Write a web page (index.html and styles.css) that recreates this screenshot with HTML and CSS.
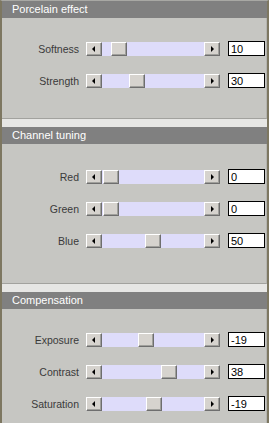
FILE: index.html
```html
<!DOCTYPE html>
<html lang="en">
<head>
<meta charset="UTF-8">
<title>Porcelain</title>
<link rel="stylesheet" href="styles.css">
</head>
<body>
<div class="panel">

  <section class="group">
    <h3 class="group-title">Porcelain effect</h3>
    <div class="group-body">
      <div class="row">
        <label>Softness</label>
        <div class="slider">
          <span class="btn btn-left"></span>
          <span class="track"><span class="thumb" style="left: 9px"></span></span>
          <span class="btn btn-right"></span>
        </div>
        <input type="text" value="10">
      </div>
      <div class="row">
        <label>Strength</label>
        <div class="slider">
          <span class="btn btn-left"></span>
          <span class="track"><span class="thumb" style="left: 27px"></span></span>
          <span class="btn btn-right"></span>
        </div>
        <input type="text" value="30">
      </div>
    </div>
  </section>

  <section class="group">
    <h3 class="group-title">Channel tuning</h3>
    <div class="group-body">
      <div class="row">
        <label>Red</label>
        <div class="slider">
          <span class="btn btn-left"></span>
          <span class="track"><span class="thumb" style="left: 1px"></span></span>
          <span class="btn btn-right"></span>
        </div>
        <input type="text" value="0">
      </div>
      <div class="row">
        <label>Green</label>
        <div class="slider">
          <span class="btn btn-left"></span>
          <span class="track"><span class="thumb" style="left: 1px"></span></span>
          <span class="btn btn-right"></span>
        </div>
        <input type="text" value="0">
      </div>
      <div class="row">
        <label>Blue</label>
        <div class="slider">
          <span class="btn btn-left"></span>
          <span class="track"><span class="thumb" style="left: 43px"></span></span>
          <span class="btn btn-right"></span>
        </div>
        <input type="text" value="50">
      </div>
    </div>
  </section>

  <section class="group">
    <h3 class="group-title">Compensation</h3>
    <div class="group-body">
      <div class="row">
        <label>Exposure</label>
        <div class="slider">
          <span class="btn btn-left"></span>
          <span class="track"><span class="thumb" style="left: 36px"></span></span>
          <span class="btn btn-right"></span>
        </div>
        <input type="text" value="-19">
      </div>
      <div class="row">
        <label>Contrast</label>
        <div class="slider">
          <span class="btn btn-left"></span>
          <span class="track"><span class="thumb" style="left: 59px"></span></span>
          <span class="btn btn-right"></span>
        </div>
        <input type="text" value="38">
      </div>
      <div class="row">
        <label>Saturation</label>
        <div class="slider">
          <span class="btn btn-left"></span>
          <span class="track"><span class="thumb" style="left: 44px"></span></span>
          <span class="btn btn-right"></span>
        </div>
        <input type="text" value="-19">
      </div>
    </div>
  </section>

</div>
</body>
</html>
```

FILE: styles.css
```css
body {
  margin: 0;
  font-family: 'Liberation Sans', Arial, sans-serif;
  font-size: 10.5px;
  background-color: #c6c6c2;
  color: #3a3a3a;
}
.panel {
  height: 423px;
  box-sizing: border-box;
  border-left: 2px solid #7d7761;
  border-right: 2px solid #7d7761;
  border-top: 1px solid #a8a8a4;
  display: flex;
  flex-direction: column;
}
.group-title {
  margin: 0;
  height: 17px;
  line-height: 17px;
  padding-left: 10px;
  background-color: #808080;
  color: #fff;
  font-size: 11px;
  font-weight: normal;
}
.group-body {
  padding: 23px 0 0;
  display: flex;
  flex-direction: column;
  gap: 17px;
  border-right: 1px solid #b4b4b0;
}
.group:nth-child(1) .group-body {
  height: 101px;
  box-sizing: border-box;
  border-bottom: 1px solid #a2a29e;
}
.group:nth-child(2) .group-body {
  height: 140px;
  box-sizing: border-box;
  padding-top: 25px;
  border-bottom: 1px solid #a2a29e;
}
.group:nth-child(3) {
  flex: 1;
  display: flex;
  flex-direction: column;
}
.group:nth-child(3) .group-body {
  flex: 1;
}
.group + .group {
  border-top: 8px solid #e6e6e4;
}
.row {
  display: flex;
  align-items: center;
  height: 15px;
}
.row label {
  width: 77px;
  text-align: right;
  margin-right: 7px;
  white-space: nowrap;
}
.slider {
  display: flex;
  width: 134px;
  height: 14px;
}
.btn, .thumb {
  box-sizing: border-box;
  width: 16px;
  height: 14px;
  background-color: #d6d3ce;
  border-top: 1px solid #fff;
  border-left: 1px solid #fff;
  border-right: 1px solid #6e6e6e;
  border-bottom: 1px solid #6e6e6e;
  box-shadow: inset -1px -1px 0 #a0a09c;
}
.btn {
  display: flex;
  align-items: center;
  justify-content: center;
}
.btn::before {
  content: "";
  width: 0;
  height: 0;
  border-top: 3px solid transparent;
  border-bottom: 3px solid transparent;
}
.btn-left::before {
  border-right: 3px solid #000;
  margin-right: 1px;
}
.btn-right::before {
  border-left: 3px solid #000;
  margin-left: 1px;
}
.track {
  position: relative;
  flex: 1;
  background-color: #dedcfa;
}
.thumb {
  position: absolute;
  top: 0;
}
.row input {
  margin-left: 8px;
  box-sizing: border-box;
  width: 37px;
  height: 15px;
  padding: 0 2px;
  border: 1px solid #000;
  background: #fff;
  font-family: 'Liberation Sans', Arial, sans-serif;
  font-size: 11px;
  color: #000;
  outline: none;
}
```
